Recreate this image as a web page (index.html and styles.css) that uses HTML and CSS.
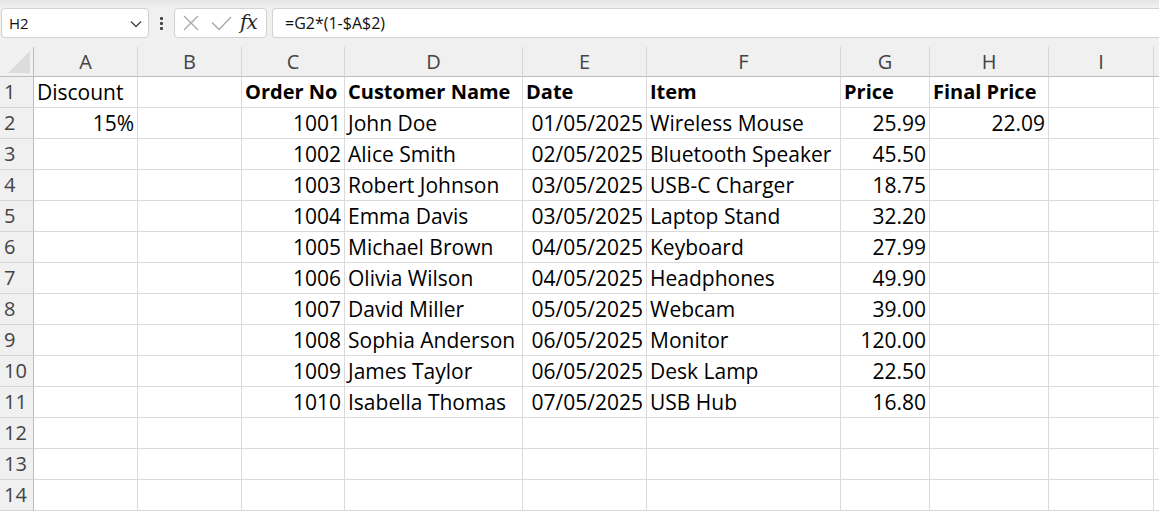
FILE: index.html
```html
<!DOCTYPE html>
<html>
<head>
<meta charset="utf-8">
<link rel="stylesheet" href="styles.css">
</head>
<body>
<div class="topbar">
  <div class="fbar">
    <div class="namebox">
      <span class="nb-text">H2</span>
      <svg class="chev" width="12" height="8" viewBox="0 0 12 8"><path d="M1 1.5 L6 6.5 L11 1.5" fill="none" stroke="#444" stroke-width="1.3"/></svg>
    </div>
    <div class="dots"><i></i><i></i><i></i></div>
    <div class="fxbox">
      <svg class="ic-x" width="16" height="16" viewBox="0 0 16 16"><path d="M1 1 L15 15 M15 1 L1 15" stroke="#a8a8a8" stroke-width="1.3" fill="none"/></svg>
      <svg class="ic-ok" width="22" height="16" viewBox="0 0 22 16"><path d="M2 7.5 L9 14.5 L21 2" stroke="#a8a8a8" stroke-width="1.3" fill="none"/></svg>
      <span class="fx">fx</span>
    </div>
    <div class="formula">=G2*(1-$A$2)</div>
  </div>
</div>

<div class="sheet">
  <div class="row hdr">
    <div class="c corner"><span class="tri"></span></div>
    <div class="c">A</div><div class="c">B</div><div class="c">C</div><div class="c">D</div><div class="c">E</div><div class="c">F</div><div class="c">G</div><div class="c">H</div><div class="c">I</div><div class="c last"></div>
  </div>

  <div class="row"><div class="c rn">1</div><div class="c">Discount</div><div class="c"></div><div class="c b">Order No</div><div class="c b">Customer Name</div><div class="c b">Date</div><div class="c b">Item</div><div class="c b">Price</div><div class="c b">Final Price</div><div class="c"></div><div class="c last"></div></div>
  <div class="row"><div class="c rn">2</div><div class="c r">15%</div><div class="c"></div><div class="c r">1001</div><div class="c">John Doe</div><div class="c r">01/05/2025</div><div class="c">Wireless Mouse</div><div class="c r">25.99</div><div class="c r">22.09</div><div class="c"></div><div class="c last"></div></div>
  <div class="row"><div class="c rn">3</div><div class="c"></div><div class="c"></div><div class="c r">1002</div><div class="c">Alice Smith</div><div class="c r">02/05/2025</div><div class="c">Bluetooth Speaker</div><div class="c r">45.50</div><div class="c"></div><div class="c"></div><div class="c last"></div></div>
  <div class="row"><div class="c rn">4</div><div class="c"></div><div class="c"></div><div class="c r">1003</div><div class="c">Robert Johnson</div><div class="c r">03/05/2025</div><div class="c">USB-C Charger</div><div class="c r">18.75</div><div class="c"></div><div class="c"></div><div class="c last"></div></div>
  <div class="row"><div class="c rn">5</div><div class="c"></div><div class="c"></div><div class="c r">1004</div><div class="c">Emma Davis</div><div class="c r">03/05/2025</div><div class="c">Laptop Stand</div><div class="c r">32.20</div><div class="c"></div><div class="c"></div><div class="c last"></div></div>
  <div class="row"><div class="c rn">6</div><div class="c"></div><div class="c"></div><div class="c r">1005</div><div class="c">Michael Brown</div><div class="c r">04/05/2025</div><div class="c">Keyboard</div><div class="c r">27.99</div><div class="c"></div><div class="c"></div><div class="c last"></div></div>
  <div class="row"><div class="c rn">7</div><div class="c"></div><div class="c"></div><div class="c r">1006</div><div class="c">Olivia Wilson</div><div class="c r">04/05/2025</div><div class="c">Headphones</div><div class="c r">49.90</div><div class="c"></div><div class="c"></div><div class="c last"></div></div>
  <div class="row"><div class="c rn">8</div><div class="c"></div><div class="c"></div><div class="c r">1007</div><div class="c">David Miller</div><div class="c r">05/05/2025</div><div class="c">Webcam</div><div class="c r">39.00</div><div class="c"></div><div class="c"></div><div class="c last"></div></div>
  <div class="row"><div class="c rn">9</div><div class="c"></div><div class="c"></div><div class="c r">1008</div><div class="c">Sophia Anderson</div><div class="c r">06/05/2025</div><div class="c">Monitor</div><div class="c r">120.00</div><div class="c"></div><div class="c"></div><div class="c last"></div></div>
  <div class="row"><div class="c rn">10</div><div class="c"></div><div class="c"></div><div class="c r">1009</div><div class="c">James Taylor</div><div class="c r">06/05/2025</div><div class="c">Desk Lamp</div><div class="c r">22.50</div><div class="c"></div><div class="c"></div><div class="c last"></div></div>
  <div class="row"><div class="c rn">11</div><div class="c"></div><div class="c"></div><div class="c r">1010</div><div class="c">Isabella Thomas</div><div class="c r">07/05/2025</div><div class="c">USB Hub</div><div class="c r">16.80</div><div class="c"></div><div class="c"></div><div class="c last"></div></div>
  <div class="row"><div class="c rn">12</div><div class="c"></div><div class="c"></div><div class="c"></div><div class="c"></div><div class="c"></div><div class="c"></div><div class="c"></div><div class="c"></div><div class="c"></div><div class="c last"></div></div>
  <div class="row"><div class="c rn">13</div><div class="c"></div><div class="c"></div><div class="c"></div><div class="c"></div><div class="c"></div><div class="c"></div><div class="c"></div><div class="c"></div><div class="c"></div><div class="c last"></div></div>
  <div class="row"><div class="c rn">14</div><div class="c"></div><div class="c"></div><div class="c"></div><div class="c"></div><div class="c"></div><div class="c"></div><div class="c"></div><div class="c"></div><div class="c"></div><div class="c last"></div></div>
</div>
</body>
</html>
```

FILE: styles.css
```css
* { box-sizing: border-box; }
html, body { margin: 0; padding: 0; }
body {
  background: #ffffff;
  font-family: "Open Sans", "Noto Sans", sans-serif;
  color: #000;
  overflow: hidden;
  width: 1159px;
  height: 511px;
}

.topbar {
  height: 47px;
  background: linear-gradient(#e4e4e4 0px, #efefef 6px, #f0f0f0 8px);
  padding-top: 8px;
}
.fbar {
  display: flex;
  align-items: stretch;
  height: 30px;
  padding-left: 1px;
}
.namebox {
  width: 148px;
  background: #fff;
  border: 1px solid #d2d2d2;
  border-radius: 4px;
  display: flex;
  align-items: center;
  justify-content: space-between;
  padding: 0 6px 0 7px;
  font-size: 15px;
  color: #111;
}
.chev { margin-top: 1px; }
.dots {
  width: 25px;
  display: flex;
  flex-direction: column;
  align-items: center;
  justify-content: center;
  gap: 2px;
}
.dots i {
  display: block;
  width: 3px;
  height: 3px;
  background: #444;
  border-radius: 1px;
}
.fxbox {
  width: 93px;
  background: #fff;
  border: 1px solid #d2d2d2;
  border-radius: 4px;
  display: flex;
  align-items: center;
  padding-left: 8px;
}
.ic-x { margin-right: 11px; }
.ic-ok { margin-right: 8px; }
.fx {
  font-family: "DejaVu Serif", "Liberation Serif", serif;
  font-style: italic;
  font-size: 20px;
  color: #262626;
  letter-spacing: -1px;
  line-height: 1;
  margin-top: -2px;
}
.formula {
  flex: 1;
  margin-left: 5px;
  background: #fff;
  border: 1px solid #d2d2d2;
  border-right: none;
  border-radius: 4px 0 0 4px;
  display: flex;
  align-items: center;
  padding-left: 12px;
  font-size: 16px;
  color: #111;
}

.sheet { width: 1159px; }
.row {
  display: grid;
  grid-template-columns: 34px 104px 104px 103px 178px 124px 194px 89px 119px 105px 1fr;
  height: 31px;
}
.c {
  border-right: 1px solid #dadada;
  border-bottom: 1px solid #dadada;
  font-size: 21px;
  line-height: 30px;
  padding: 0 4px 0 3px;
  white-space: nowrap;
  overflow: hidden;
}
.c.last { border-right: none; }
.c.r { text-align: right; padding-right: 3px; }
.c.b { font-weight: 700; font-size: 20px; }

.row.hdr {
  height: 30px;
  background: #f0f0f0;
}
.row.hdr .c {
  text-align: center;
  color: #444;
  font-size: 20px;
  line-height: 29px;
  border-right-color: #d6d6d6;
  border-bottom-color: #bdbdbd;
  padding: 0;
  position: relative;
}
.row.hdr .c.corner { border-right-color: #bdbdbd; }
.tri {
  position: absolute;
  right: 3px;
  bottom: 3px;
  width: 0;
  height: 0;
  border-left: 22px solid transparent;
  border-bottom: 22px solid #dcdcdc;
}
.c.rn {
  background: #f0f0f0;
  color: #444;
  font-size: 20px;
  padding: 0 0 0 4px;
  border-right-color: #bdbdbd;
  border-bottom-color: #d6d6d6;
}
```
